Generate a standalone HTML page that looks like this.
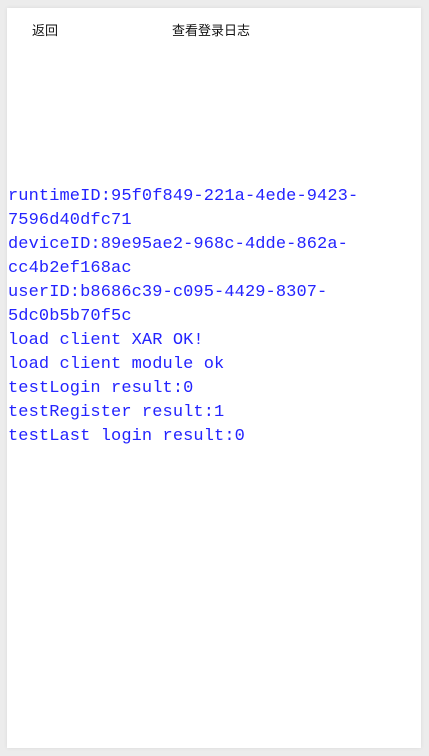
<!DOCTYPE html>
<html><head><meta charset="utf-8"><style>
html,body{margin:0;padding:0;width:429px;height:756px;background:#ececec;overflow:hidden}
.card{position:absolute;left:7px;top:8px;width:414px;height:740px;background:#fff;box-shadow:0 0 4px rgba(0,0,0,.08)}
.hd{position:absolute;top:12px;font:13px "Liberation Sans","Noto Sans CJK SC",sans-serif;color:#111}
.log{position:absolute;left:1px;top:177px;font:17px/24px "Liberation Mono","Noto Sans CJK SC",monospace;color:#2323ff;white-space:pre;letter-spacing:0.1px}
</style></head><body>
<div class="card">
<div class="hd" style="left:25px">返回</div>
<div class="hd" style="left:165px">查看登录日志</div>
<div class="log">runtimeID:95f0f849-221a-4ede-9423-
7596d40dfc71
deviceID:89e95ae2-968c-4dde-862a-
cc4b2ef168ac
userID:b8686c39-c095-4429-8307-
5dc0b5b70f5c
load client XAR OK!
load client module ok
testLogin result:0
testRegister result:1
testLast login result:0</div>
</div>
</body></html>
